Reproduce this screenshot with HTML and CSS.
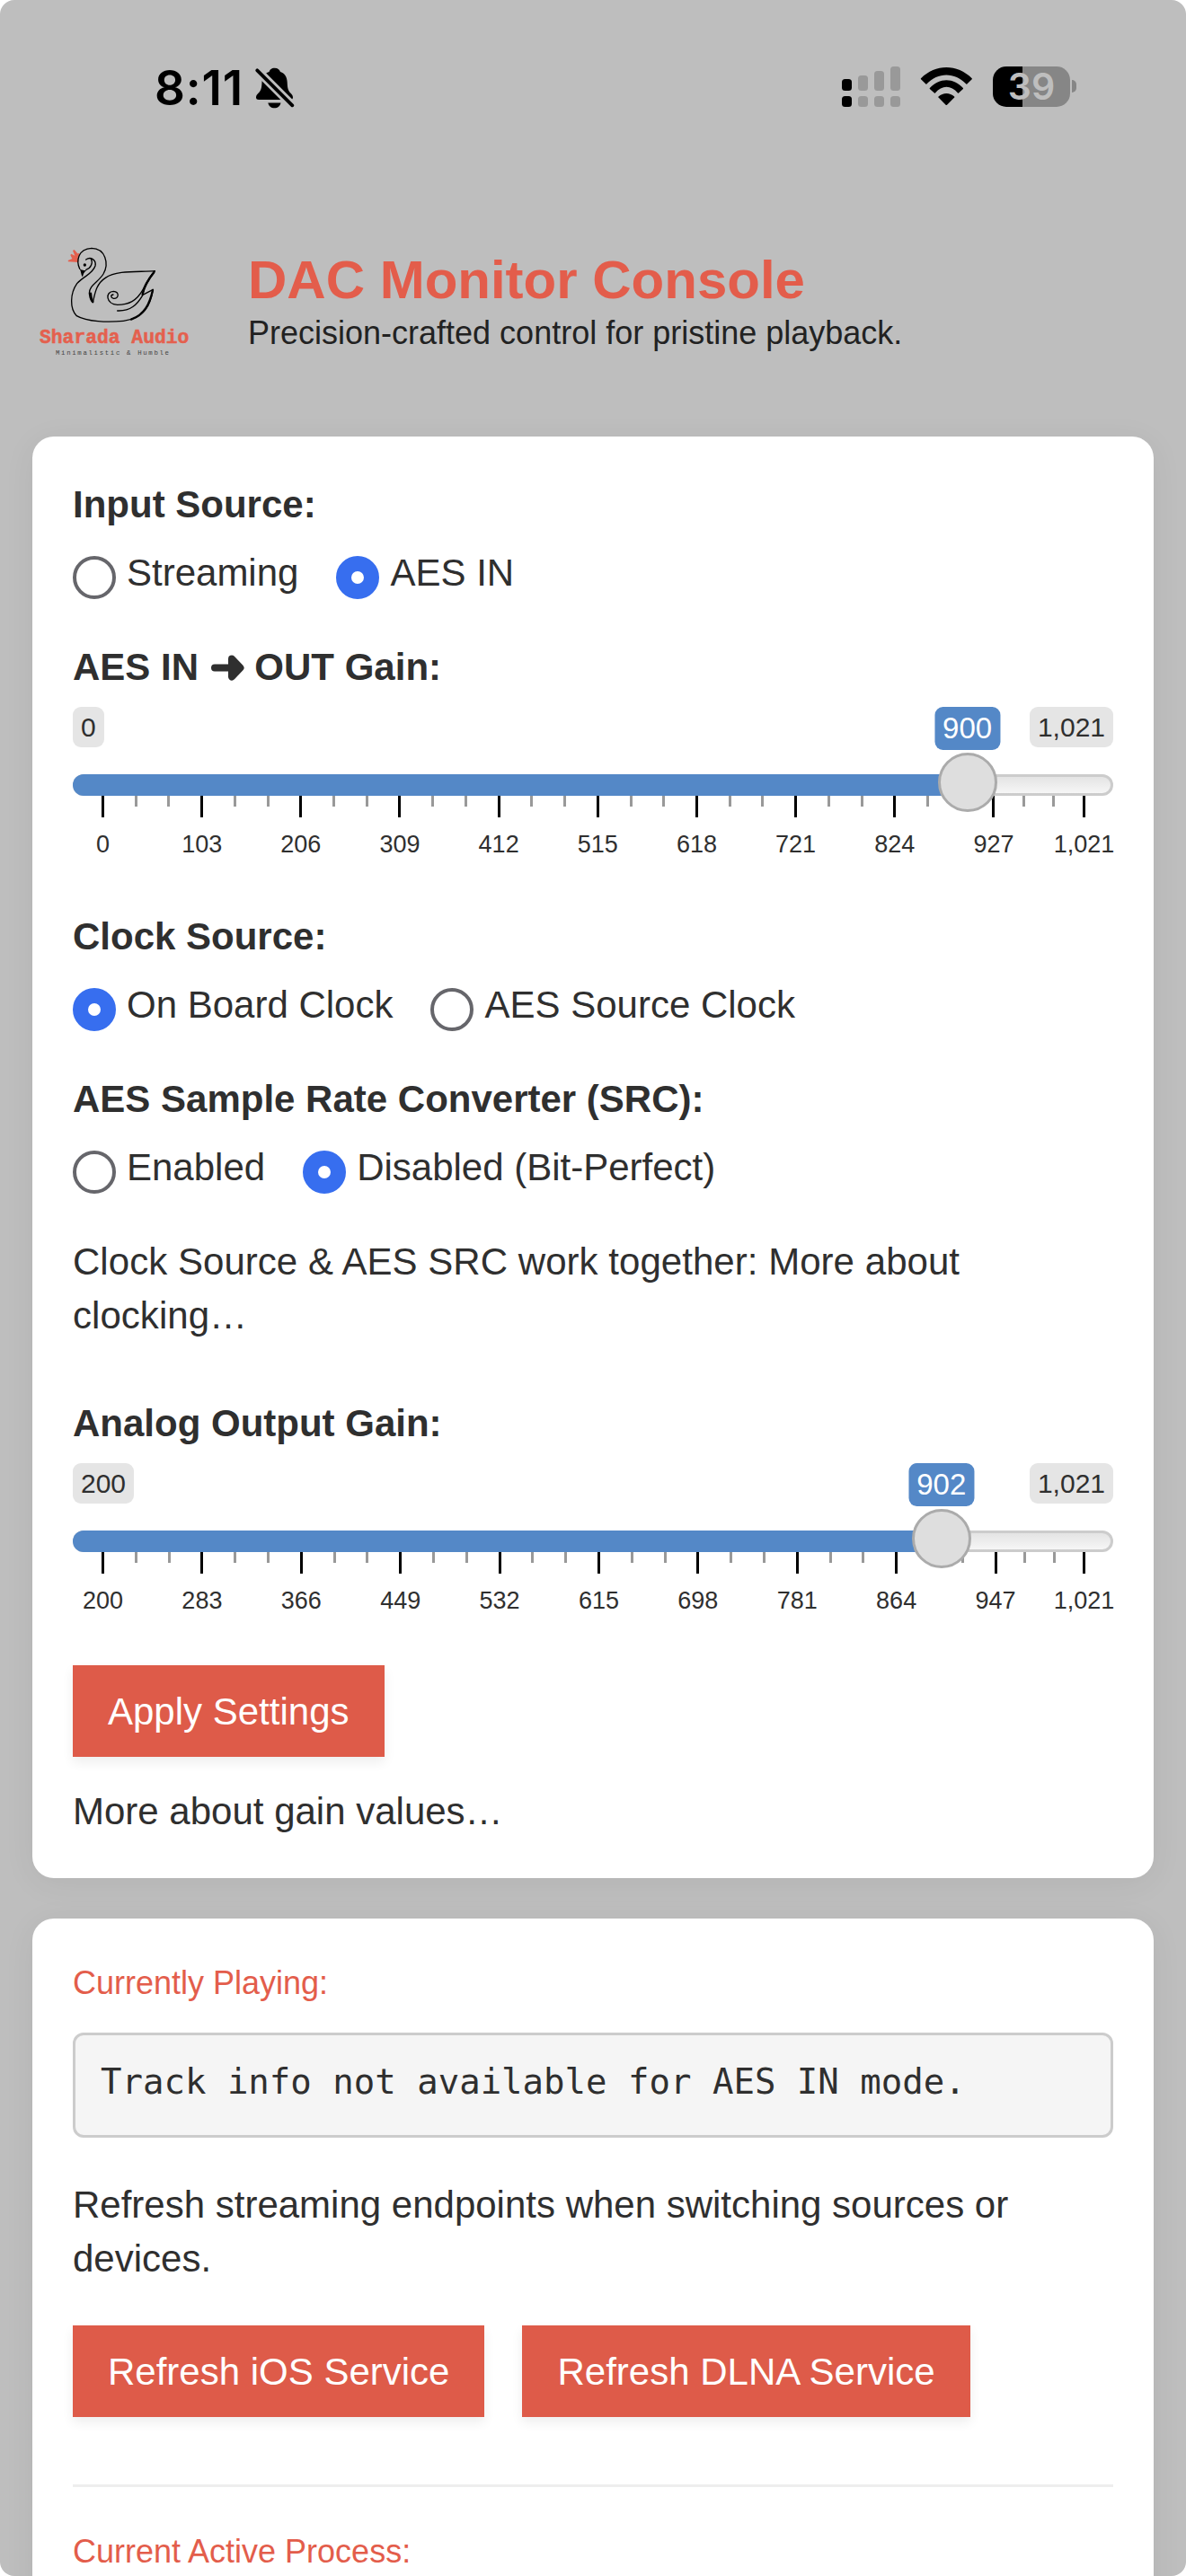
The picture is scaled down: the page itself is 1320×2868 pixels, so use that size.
FILE: index.html
```html
<!DOCTYPE html>
<html lang="en">
<head>
    <meta charset="UTF-8">
    <meta name="viewport" content="width=device-width, initial-scale=1.0">
    <title>DAC Monitor Console</title>
    <link rel="stylesheet" href="styles.css">
</head>
<body>
    <div class="screen">
        <div class="status-bar">
            <div class="status-left">
                <span class="time">8:11</span>
                <svg class="bell" width="44" height="48" viewBox="0 0 44 48">
                    <path d="M21.7 1.7C18 1.7 16.500 3.500 15.500 6C10 8 7.700 12 7.500 17.500C7.200 24.500 6.500 27 3.200 30C1.500 31.700 1 33 1 34.500C1 36.200 2.200 37 4 37H39C40.800 37 42 36.200 42 34.500C42 33 41.400 31.700 39.800 30C36.600 27 36 24.500 35.700 17.500C35.400 12 33.500 8 28 6C27 3.500 25.300 1.700 21.700 1.700Z"/>
                    <path d="M14.300 40.500H28.500C27.700 44.100 25.100 46.300 21.400 46.300S15.100 44.100 14.300 40.500Z"/>
                    <path class="slash-gap" d="M-1 1L44 46"/>
                    <path class="slash" d="M2.300 4.300L41.300 43.300"/>
                </svg>
            </div>
            <div class="status-right">
                <svg width="66" height="46" viewBox="0 0 66 46">
                    <g fill="#000">
                        <rect x="0" y="14" width="11" height="13" rx="3.500"/>
                        <rect x="0" y="33" width="11" height="12" rx="3.500"/>
                    </g>
                    <g fill="#999">
                        <rect x="18" y="10" width="11" height="17" rx="3.500"/>
                        <rect x="36" y="5" width="11" height="22" rx="3.500"/>
                        <rect x="54" y="0" width="11" height="27" rx="3.500"/>
                        <rect x="18" y="33" width="11" height="12" rx="3.500"/>
                        <rect x="36" y="33" width="11" height="12" rx="3.500"/>
                        <rect x="54" y="33" width="11" height="12" rx="3.500"/>
                    </g>
                </svg>
                <svg width="60" height="46" viewBox="0 0 60 46">
                    <path d="M1 13.300C17-3 41.600-3 57.700 13.300q.4.5 0 1L52.300 19.500q-.5.400-1 0C39 6 19.500 6 7.400 19.500q-.5.400-1 0L1 14.300q-.4-.5 0-1z"/>
                    <path d="M10.800 24C21.500 12.300 37.300 12.300 47.900 24q.3.500 0 1L43 29.500q-.5.400-1 0C34.500 20.500 24.300 20.500 16.900 29.500q-.5.400-1 0L10.800 25q-.4-.5 0-1z"/>
                    <path d="M20.500 33.500c5-4.700 12.700-4.700 17.700 0q.4.500 0 1L30 42.700q-.7.600-1.400 0L20.500 34.500q-.4-.5 0-1z"/>
                </svg>
                <div class="battery"><span>39</span></div>
                <div class="battery-tip"></div>
            </div>
        </div>

        <header class="header">
            <svg class="logo" width="200" height="150" viewBox="0 0 600 450">
                <path class="crown" d="M172 96L138 94 137 90 151 84 145 72 148 68 160 74 153 57 158 54 169 67 176 66 170 80z"/>
                <path d="M176 118C164 92 170 51 216 49C262 50 275 100 255 135C238 163 208 172 208 200C210 217 214 226 220 230C227 200 231 168 262 148C300 122 370 129 427 125C406 146 398 165 387 188C366 225 340 238 302 238C263 236 260 194 289 193C310 195 307 219 289 217C279 214 279 205 288 204"/>
                <path d="M302 258C345 260 368 238 387 205M427 125C405 155 392 180 385 206L421 187C412 240 392 284 322 292C270 297 200 295 166 275C142 250 144 200 167 167C190 141 219 136 228 108C232 88 213 76 197 87"/>
                <path d="M197 121C214 116 221 98 214 84"/>
                <path class="fat" d="M424 130C400 160 390 180 386 203M420 189C410 235 392 272 348 287M213 200C214 215 217 224 220 228"/>
                <path class="beak" d="M175 116C182 124 191 122 199 124C190 128 188 137 186 145C180 138 182 128 175 116z"/>
                <circle cx="193" cy="105" r="5"/>
                <text class="logo-name" x="42" y="365" textLength="499">Sharada Audio</text>
                <text class="logo-tag" x="96" y="406" textLength="378">Minimalistic &amp; Humble</text>
            </svg>
            <div class="titles">
                <h1>DAC Monitor Console</h1>
                <p>Precision-crafted control for pristine playback.</p>
            </div>
        </header>

        <div class="panel">
            <div class="form-group">
                <div class="control-label">Input Source:</div>
                <div class="radios">
                    <label><input type="radio" name="input"> <span>Streaming</span></label>
                    <label><input type="radio" name="input" checked> <span>AES IN</span></label>
                </div>
            </div>

            <div class="form-group">
                <div class="control-label">AES IN <svg class="arrow" width="39" height="30" viewBox="0 0 39 30"><path d="M6 15.500h18M25 5.500l9.500 10-9.500 10z"/></svg> OUT Gain:</div>
                <div class="slider" data-min="0" data-max="1021" data-value="900" data-step="103"></div>
            </div>

            <div class="form-group">
                <div class="control-label">Clock Source:</div>
                <div class="radios">
                    <label><input type="radio" name="clock" checked> <span>On Board Clock</span></label>
                    <label><input type="radio" name="clock"> <span>AES Source Clock</span></label>
                </div>
            </div>

            <div class="form-group">
                <div class="control-label">AES Sample Rate Converter (SRC):</div>
                <div class="radios">
                    <label><input type="radio" name="src"> <span>Enabled</span></label>
                    <label><input type="radio" name="src" checked> <span>Disabled (Bit-Perfect)</span></label>
                </div>
            </div>

            <p class="clock-note">Clock Source &amp; AES SRC work together: More about clocking…</p>

            <div class="form-group">
                <div class="control-label">Analog Output Gain:</div>
                <div class="slider" data-min="200" data-max="1021" data-value="902" data-step="83"></div>
            </div>

            <button class="btn">Apply Settings</button>
            <p class="gain-note">More about gain values…</p>
        </div>

        <div class="panel">
            <h4>Currently Playing:</h4>
            <pre>Track info not available for AES IN mode.</pre>
            <p class="refresh-note">Refresh streaming endpoints when switching sources or devices.</p>
            <div class="btn-row">
                <button class="btn">Refresh iOS Service</button>
                <button class="btn">Refresh DLNA Service</button>
            </div>
            <hr>
            <h4>Current Active Process:</h4>
        </div>
    </div>

    <script>
        function buildSlider(el) {
            const min = Number(el.dataset.min);
            const max = Number(el.dataset.max);
            const value = Number(el.dataset.value);
            const step = Number(el.dataset.step);
            const ratio = (value - min) / (max - min);

            let grid = "";
            for (let v = min; v < max; v += step) {
                const size = Math.min(step, max - v);
                grid += `<div class="seg" style="flex-grow: ${size}">
                    <div class="ticks"><i></i><i></i><i></i></div>
                    <div class="tick-label">${v}</div>
                </div>`;
            }
            grid += `<div class="seg last"><div class="ticks"><i></i></div>
                <div class="tick-label">${max.toLocaleString("en-US")}</div></div>`;

            el.innerHTML = `
                <div class="limits"><span>${min}</span><span>${max.toLocaleString("en-US")}</span></div>
                <div class="line"><div class="bar" style="width: ${ratio * 94.3 + 2.85}%"></div></div>
                <div class="grid">${grid}</div>
                <div class="travel">
                    <span class="single" style="left: ${ratio * 100}%">${value}</span>
                    <span class="handle" style="left: ${ratio * 100}%"></span>
                </div>`;
        }
        document.querySelectorAll(".slider").forEach(buildSlider);
    </script>
</body>
</html>
```

FILE: styles.css
```css
* {
    box-sizing: border-box;
}
body {
    margin: 0;
    background-color: #fff;
    font-family: "Liberation Sans", Arial, sans-serif;
    font-size: 42px;
    line-height: 60px;
    color: #2f2f2f;
}
.screen {
    height: 2868px;
    overflow: hidden;
    background-color: #bebebe;
    border-radius: 16px;
}
h1, h4, p, pre {
    margin: 0;
    font-weight: normal;
}

/* status bar */
.status-bar {
    display: flex;
    justify-content: space-between;
    padding: 74px 122px 0 172px;
    height: 260px;
    color: #000;
}
.status-left {
    display: flex;
}
.time {
    font-family: Inter, sans-serif;
    font-weight: 600;
    font-size: 53px;
    line-height: 48px;
    letter-spacing: 0.8px;
    width: 112px;
    white-space: nowrap;
}
.bell .slash, .bell .slash-gap {
    fill: none;
    stroke: #000;
    stroke-width: 3.8;
    stroke-linecap: round;
}
.bell .slash-gap {
    stroke: #bebebe;
    stroke-width: 9.5;
}
.status-right {
    display: flex;
}
.status-right svg + svg {
    margin-left: 21px;
}
.battery {
    width: 86px;
    height: 45px;
    margin-left: 21px;
    border-radius: 15px;
    background: linear-gradient(to right, #000 33px, #868686 33px);
    color: #bebebe;
    font-family: Inter, sans-serif;
    font-weight: 600;
    font-size: 41px;
    line-height: 45px;
    text-align: center;
}
.battery-tip {
    width: 5px;
    height: 14px;
    margin: 15px 0 0 2px;
    border-radius: 0 5px 5px 0;
    background-color: #868686;
}

/* header */
.header {
    display: flex;
    padding-left: 30px;
    height: 226px;
}
.logo {
    fill: none;
    stroke: #000;
    stroke-width: 4;
    stroke-linejoin: round;
    stroke-linecap: round;
}
.logo .crown {
    fill: #e4604e;
    stroke: none;
}
.logo .beak, .logo circle {
    fill: #000;
    stroke: none;
}
.logo .fat {
    stroke-width: 7;
}
.logo text {
    font-family: "Liberation Mono", monospace;
    stroke: none;
}
.logo .logo-name {
    font-size: 64px;
    font-weight: bold;
    fill: #e4604e;
    stroke: #e4604e;
    stroke-width: 1.5;
}
.logo-tag {
    font-size: 22px;
    fill: #444;
}
.titles {
    padding: 16px 0 0 46px;
}
.titles h1 {
    font-size: 60px;
    line-height: 72px;
    font-weight: bold;
    color: #e35d4b;
}
.titles p {
    font-size: 36px;
    line-height: 46px;
    color: #222;
}

/* panels */
.panel {
    margin: 0 36px 45px;
    padding: 45px;
    border-radius: 24px;
    background-color: #fff;
    box-shadow: 0 6px 36px rgba(0, 0, 0, 0.06);
}
.form-group {
    margin-bottom: 45px;
}
.control-label {
    padding-top: 1px;
    margin-bottom: -1px;
    font-weight: bold;
}
.arrow {
    vertical-align: baseline;
    margin-bottom: -1px;
    fill: #2f2f2f;
    stroke: #2f2f2f;
    stroke-width: 8;
    stroke-linecap: round;
    stroke-linejoin: round;
}
.radios {
    display: flex;
    gap: 42px;
    height: 60px;
    margin-top: 16px;
}
.radios label {
    display: flex;
    gap: 12px;
}
.radios span {
    padding-top: 1px;
}
.radios input {
    appearance: none;
    width: 48px;
    height: 48px;
    margin: 12px 0 0;
    border: 4px solid #66666b;
    border-radius: 50%;
    background-color: #fff;
}
.radios input:checked {
    border: 17px solid #376eef;
}
.clock-note {
    padding-top: 1px;
    margin-bottom: 59px;
    letter-spacing: 0.04px;
}
.gain-note {
    padding-top: 31px;
    margin-bottom: -1px;
}

/* range slider */
.slider {
    position: relative;
    height: 180px;
    margin-top: 15px;
}
.control-label + .slider {
    margin-top: 15px;
}
.limits {
    display: flex;
    justify-content: space-between;
    align-items: flex-start;
    height: 75px;
}
.limits span {
    padding: 1px 9px 0;
    border-radius: 9px;
    background-color: #e5e5e5;
    font-size: 30px;
    line-height: 44px;
}
.line {
    height: 24px;
    border-radius: 24px;
    border: 3px solid #ccc;
    background: linear-gradient(to bottom, #e4e4e4, #f6f6f6);
}
.bar {
    height: 24px;
    margin: -3px 0 0 -3px;
    border-radius: 24px 0 0 24px;
    background-color: #5488c7;
}
.grid {
    display: flex;
    margin: 0 34px 0 32px;
}
.seg {
    flex: 1 1 0;
}
.seg.last {
    flex: 0 0 0;
    width: 0;
}
.ticks {
    display: flex;
    height: 41px;
}
.ticks i {
    flex: 1;
    height: 12px;
    border-left: 3px solid #999;
}
.ticks i:first-child {
    height: 24px;
    border-color: #000;
}
.tick-label {
    display: flex;
    justify-content: center;
    width: 3px;
    font-size: 27px;
    line-height: 27px;
}
.travel {
    position: absolute;
    top: 0;
    left: 33px;
    right: 33px;
}
.single {
    position: absolute;
    top: 0;
    transform: translateX(-50%);
    padding: 0 9px;
    border-radius: 9px;
    background-color: #5488c7;
    color: #fff;
    font-size: 33px;
    line-height: 48px;
}
.handle {
    position: absolute;
    top: 51px;
    width: 66px;
    height: 66px;
    margin-left: -33px;
    border: 3px solid #ababab;
    border-radius: 50%;
    background-color: #dedede;
}

.btn {
    display: block;
    height: 102px;
    padding: 2px 39px 0;
    border: none;
    background-color: #de5b49;
    color: #fff;
    font-family: inherit;
    font-size: 42px;
    box-shadow: 0 6px 12px rgba(0, 0, 0, 0.07);
}
.btn-row {
    display: flex;
    gap: 42px;
}

h4 {
    padding-top: 1px;
    font-size: 36px;
    line-height: 52px;
    color: #e35d4b;
}
pre {
    height: 117px;
    margin: 29px 0 44px;
    padding: 25px 28px;
    border: 3px solid #ccc;
    border-radius: 12px;
    background-color: #f5f5f5;
    font-family: "DejaVu Sans Mono", monospace;
    font-size: 39px;
    line-height: 54px;
}
.refresh-note {
    padding-top: 1px;
    margin-bottom: 44px;
}
hr {
    margin: 75px 0 45px;
    border: none;
    border-top: 3px solid #eee;
}
```
